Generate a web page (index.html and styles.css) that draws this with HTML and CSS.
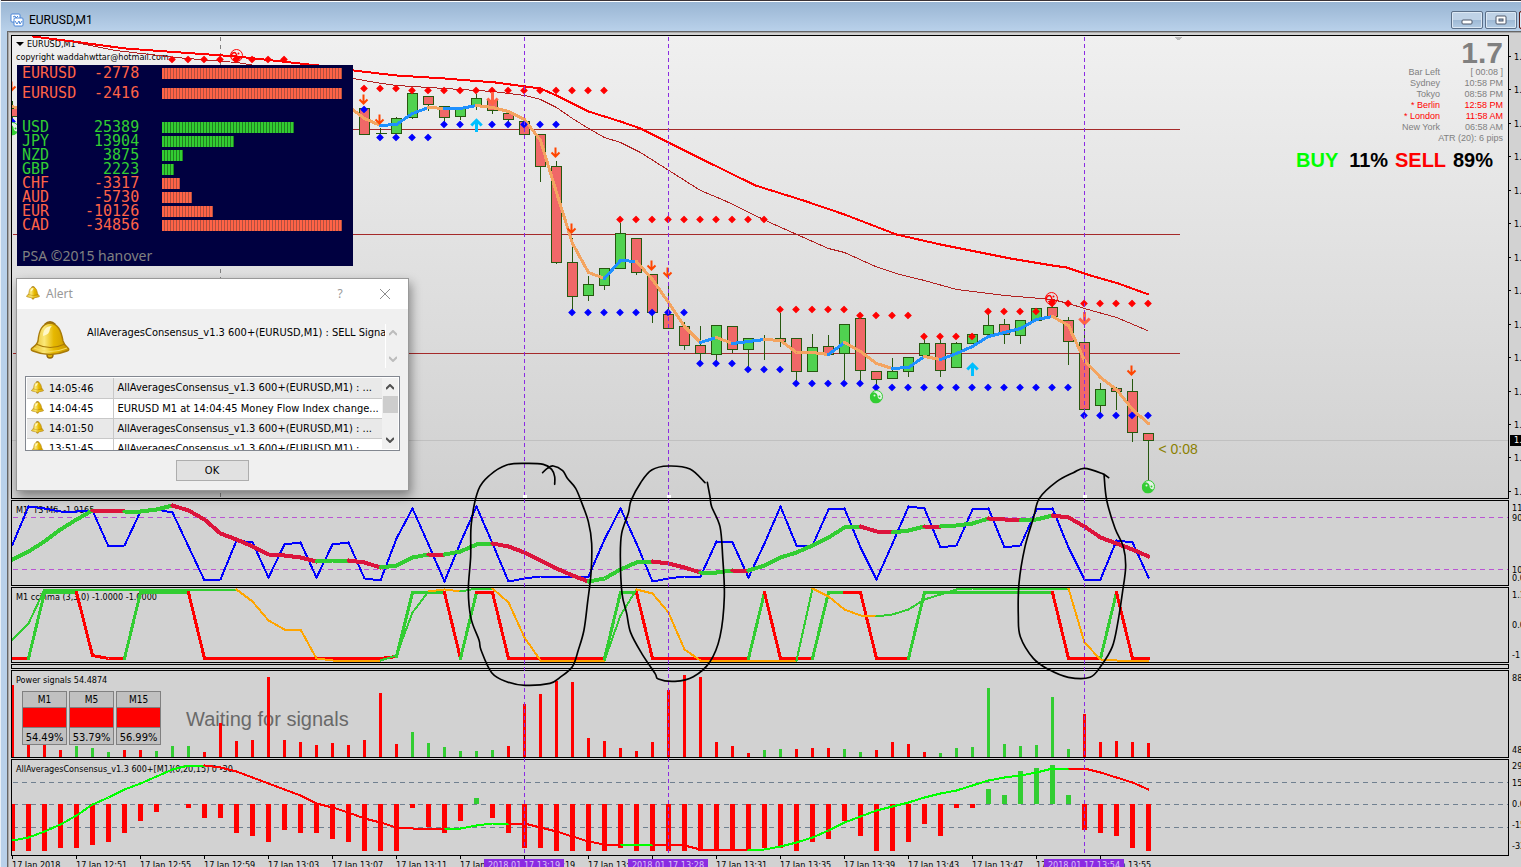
FILE: index.html
```html
<!DOCTYPE html>
<html lang="en">
<head>
<meta charset="utf-8">
<title>EURUSD,M1</title>
<link rel="stylesheet" href="styles.css">
</head>
<body>
<svg class="defs" aria-hidden="true">
  <defs>
    <linearGradient id="gold" x1="0" x2="1" y1="0" y2="0">
      <stop offset="0" stop-color="#e0b418"/><stop offset=".35" stop-color="#fbe878"/><stop offset=".6" stop-color="#e6b800"/><stop offset="1" stop-color="#c89600"/>
    </linearGradient>
    <symbol id="bell" viewBox="0 0 40 40">
      <circle cx="20" cy="35" r="3" fill="#e6b800" stroke="#94690a" stroke-width="1.4"/>
      <path d="M14 4Q20 -2 26 4L24 5H16Z" fill="#94690a"/>
      <path d="M8 21C9 10 12 4 20 3C28 4 31 10 33 21Q34 25 38 28Q40 30 37 31Q20 38 3 31Q0 30 2 28Q7 25 8 21Z" fill="url(#gold)" stroke="#a87a08" stroke-width="1.4"/>
      <path d="M13 16C13 10 16 6 22 6C18 9 22 14 13 16Z" fill="#fff8c8"/>
      <path d="M6 24Q20 31 35 24" fill="none" stroke="#a87a08" stroke-width="1.2"/>
      <path d="M4 28Q20 35 37 28" fill="none" stroke="#f4dc60" stroke-width="1.2"/>
    </symbol>
    <symbol id="yin-full" viewBox="0 0 14 14">
      <circle cx="7" cy="7" r="6" fill="#e6f2e6" stroke="currentColor" stroke-width="1"/>
      <path d="M3 3A4 4 0 0 1 8 6Q8 10 12 10A6 6 0 1 1 3 3Z" fill="currentColor"/>
      <circle cx="5" cy="6" r="1" fill="#e6f2e6"/><circle cx="10" cy="7" r="1" fill="currentColor"/>
    </symbol>
    <symbol id="yin-open" viewBox="0 0 14 14">
      <circle cx="7" cy="7" r="6" fill="none" stroke="currentColor" stroke-width="1"/>
      <path d="M2 9V6Q5 2 7 6Q7 10 12 9" fill="none" stroke="currentColor" stroke-width="1.4"/>
      <path d="M3 10L7 8L11 10Q7 14 3 10Z" fill="currentColor"/><circle cx="9" cy="5" r="1" fill="currentColor"/>
    </symbol>
  </defs>
</svg>
<div class="window">
  <header class="titlebar">
    <svg class="app-icon" viewBox="0 0 14 14"><rect x="1" y="1" width="9" height="8" rx="1" fill="#fff" stroke="#4a86d8"/><path d="M3 4L5 3L6 5L8 3" fill="none" stroke="#4a86d8"/><rect x="4" y="5" width="9" height="8" rx="1" fill="#fff" stroke="#4a86d8"/><path d="M5 8L7 11L9 8L10 11L12 8" fill="none" stroke="#4a86d8"/></svg>
    <h1>EURUSD,M1</h1>
    <div class="win-buttons">
      <button aria-label="Minimize"><svg viewBox="0 0 12 10"><rect x="1" y="5" width="10" height="4" rx="1" fill="#fff" stroke="#4c5668"/></svg></button>
      <button aria-label="Maximize"><svg viewBox="0 0 12 10"><rect x="1" y="1" width="10" height="8" rx="1" fill="#fff" stroke="#4c5668"/><rect x="4" y="4" width="4" height="2" fill="#9db8d6" stroke="#4c5668"/></svg></button>
      <button class="close" aria-label="Close"></button>
    </div>
  </header>
  <main class="client">
    <div class="charts">
      <section class="row">
        <div class="pane price">
          <div class="labels"><p class="symbol"><span class="caret"></span>EURUSD,M1</p><p>copyright waddahwttar@hotmail.com</p></div>
          <svg class="plot" id="price" height="462"></svg>
          <div class="info">
            <strong class="spread">1.7</strong>
            <dl>
              <dt>Bar Left</dt><dd>[ 00:08 ]</dd>
              <dt>Sydney</dt><dd>10:58 PM</dd>
              <dt>Tokyo</dt><dd>08:58 PM</dd>
              <dt class="open">* Berlin</dt><dd class="open">12:58 PM</dd>
              <dt class="open">* London</dt><dd class="open">11:58 AM</dd>
              <dt>New York</dt><dd>06:58 AM</dd>
            </dl>
            <p class="atr">ATR (20): 6 pips</p>
            <p class="votes"><span class="buy">BUY</span><span>11%</span><span class="sell">SELL</span><span>89%</span></p>
          </div>
        </div>
        <div class="axis price-axis"><span>1.</span><span>1.</span><span>1.</span><span>1.</span><span>1.</span><span>1.</span><span>1.</span><span>1.</span><span>1.</span><span>1.</span><span>1.</span><span>1.</span><span>1.</span><span>1.</span><b class="bid">1.</b></div>
      </section>
      <section class="row">
        <div class="pane"><div class="labels"><p>M1&nbsp; T3 Mfi&nbsp; -1.9165</p></div><svg class="plot" id="mfi" height="84"></svg></div>
        <div class="axis mfi-axis"><span>11</span><span>90</span><i></i><span>10</span><span>0.0</span></div>
      </section>
      <section class="row">
        <div class="pane"><div class="labels"><p>M1 ccinma (3,3,0) -1.0000 -1.0000</p></div><svg class="plot" id="cci" height="74"></svg></div>
        <div class="axis"><span>1.1</span><span>0.0</span><span>-1</span></div>
      </section>
      <section class="row"><div class="pane empty"></div><div class="axis"></div></section>
      <section class="row">
        <div class="pane">
          <div class="labels"><p>Power signals 54.4874</p><p class="waiting">Waiting for signals</p></div>
          <svg class="plot" id="power" height="86"></svg>
          <div class="tiles">
            <div class="tile"><b>M1</b><i></i><span>54.49%</span></div>
            <div class="tile"><b>M5</b><i></i><span>53.79%</span></div>
            <div class="tile"><b>M15</b><i></i><span>56.99%</span></div>
          </div>
        </div>
        <div class="axis"><span>88</span><span>48</span></div>
      </section>
      <section class="row">
        <div class="pane"><div class="labels"><p>AllAveragesConsensus_v1.3 600+[M1](0,20,15) 0 -30</p></div><svg class="plot" id="consensus" height="95"></svg></div>
        <div class="axis aac-axis"><span>29</span><span>15</span><span>0.0</span><span>-15</span><span>-33</span></div>
      </section>
      <svg class="overlay" id="overlay"></svg>
      <footer class="times">
        <span>17 Jan 2018</span><span>17 Jan 12:51</span><span>17 Jan 12:55</span><span>17 Jan 12:59</span><span>17 Jan 13:03</span><span>17 Jan 13:07</span><span>17 Jan 13:11</span><span>17 Jan 13:15</span><span>17 Jan 13:19</span><span>17 Jan 13:23</span><span>17 Jan 13:27</span><span>17 Jan 13:31</span><span>17 Jan 13:35</span><span>17 Jan 13:39</span><span>17 Jan 13:43</span><span>17 Jan 13:47</span><span>17 Jan 13:51</span><span>17 Jan 13:55</span>
        <mark class="m1">2018.01.17 13:19</mark><mark class="m2">2018.01.17 13:28</mark><mark class="m3">2018.01.17 13:54</mark>
      </footer>

      <aside class="psa">
        <table>
          <tr class="neg pair"><th>EURUSD</th><td>-2778</td><td><i style="width:180px"></i></td></tr>
          <tr class="neg pair"><th>EURUSD</th><td>-2416</td><td><i style="width:180px"></i></td></tr>
          <tr class="gap"><td colspan="3"></td></tr>
          <tr><th>USD</th><td>25389</td><td><i style="width:132px"></i></td></tr>
          <tr><th>JPY</th><td>13904</td><td><i style="width:72px"></i></td></tr>
          <tr><th>NZD</th><td>3875</td><td><i style="width:21px"></i></td></tr>
          <tr><th>GBP</th><td>2223</td><td><i style="width:12px"></i></td></tr>
          <tr class="neg"><th>CHF</th><td>-3317</td><td><i style="width:18px"></i></td></tr>
          <tr class="neg"><th>AUD</th><td>-5730</td><td><i style="width:30px"></i></td></tr>
          <tr class="neg"><th>EUR</th><td>-10126</td><td><i style="width:51px"></i></td></tr>
          <tr class="neg"><th>CAD</th><td>-34856</td><td><i style="width:180px"></i></td></tr>
        </table>
        <p>PSA ©2015 hanover</p>
      </aside>

      <div class="dialog" role="dialog" aria-labelledby="alert-title">
        <div class="dialog-title">
          <svg class="bell-sm"><use href="#bell"/></svg><h2 id="alert-title">Alert</h2>
          <button aria-label="Help">?</button>
          <button aria-label="Close"><svg width="12" height="12" viewBox="0 0 12 12"><path d="M1 1L11 11M11 1L1 11" stroke="#8c8c8c"/></svg></button>
        </div>
        <div class="message">
          <svg class="bell-lg"><use href="#bell"/></svg>
          <p>AllAveragesConsensus_v1.3 600+(EURUSD,M1) : SELL Signa</p>
          <div class="scroll faint"><svg viewBox="0 0 8 6"><path d="M0 5L4 1L8 5"/></svg><svg viewBox="0 0 8 6"><path d="M0 1L4 5L8 1"/></svg></div>
        </div>
        <div class="list">
          <table>
            <tr><td><svg><use href="#bell"/></svg>14:05:46</td><td>AllAveragesConsensus_v1.3 600+(EURUSD,M1) : ...</td></tr>
            <tr><td><svg><use href="#bell"/></svg>14:04:45</td><td>EURUSD M1 at 14:04:45 Money Flow Index change...</td></tr>
            <tr><td><svg><use href="#bell"/></svg>14:01:50</td><td>AllAveragesConsensus_v1.3 600+(EURUSD,M1) : ...</td></tr>
            <tr><td><svg><use href="#bell"/></svg>13:51:45</td><td>AllAveragesConsensus_v1.3 600+(EURUSD,M1) : ...</td></tr>
          </table>
          <div class="scroll"><svg viewBox="0 0 8 6"><path d="M0 5L4 1L8 5"/></svg><i></i><svg viewBox="0 0 8 6"><path d="M0 1L4 5L8 1"/></svg></div>
        </div>
        <button class="ok">OK</button>
      </div>
    </div>
  </main>
</div>
<script src="chart.js"></script>
</body>
</html>
```
FILE: styles.css
```css
* { box-sizing: border-box; margin: 0; padding: 0; }
body { font: 9px/12px "DejaVu Sans Condensed", "DejaVu Sans", sans-serif; color: #000; background: #b9d1ea; }
.defs { position: absolute; width: 0; height: 0; }
button { font: inherit; color: inherit; background: none; border: 0; }
table { border-collapse: collapse; }
i { font-style: normal; }

.window { height: 100vh; display: flex; flex-direction: column; overflow: hidden; border-left: 1px solid #e8f0f8; }
.titlebar { flex: none; height: 31px; display: flex; align-items: center; padding: 7px 0 0 9px; gap: 5px; border-top: 1px solid #3a3236; box-shadow: inset 0 1px #fff; background: linear-gradient(#98b4d2, #b9d1ea); overflow: hidden; }
.app-icon { width: 14px; height: 14px; }
.titlebar h1 { flex: 1; font: 12px/16px Roboto, sans-serif; }
.win-buttons { display: flex; gap: 2px; margin-right: -30px; }
.win-buttons button { width: 32px; height: 18px; display: grid; place-items: center; border: 1px solid #5b6f88; border-radius: 2px; box-shadow: inset 0 0 0 1px #dce8f4; background: linear-gradient(#bfd2e6 50%, #9db8d4 50%, #b4cce4); }
.win-buttons svg { width: 12px; height: 10px; }
.win-buttons .close { background: #c0402c; border-color: #5a1a14; }

.client { flex: 1; min-height: 0; margin-left: 6px; padding: 3px 0 0 3px; border: solid #666; border-width: 1px 0 0 1px; background: #d2d2d2; box-shadow: inset 1px 1px #a8a8a8; }
.charts { position: relative; display: flex; flex-direction: column; gap: 1px; }
.row { display: flex; }
.pane { position: relative; flex: 1; min-width: 0; border: 1px solid #000; background: #d2d2d2; overflow: hidden; display: grid; }
.price { background: linear-gradient(#f0f0f0, #d0d0d0); }
.pane > .labels, .pane > .plot { grid-area: 1 / 1; }
.labels { padding: 3px 4px; white-space: nowrap; }
.price .labels { padding-top: 1px; }
.price .labels p { height: 13px; line-height: 14px; }
.symbol { display: flex; align-items: center; gap: 3px; }
.caret { border: solid transparent; border-width: 4px 4px 0; border-top-color: #000; }
.plot { width: 100%; display: block; shape-rendering: crispEdges; }
.empty { height: 5px; }
.overlay { position: absolute; left: 0; top: 0; width: 100%; height: 820px; pointer-events: none; }

.axis { flex: none; width: 12px; padding: 2px 0 2px 3px; display: flex; flex-direction: column; justify-content: space-between; overflow: hidden; white-space: nowrap; position: relative; }
.price-axis { padding: 16px 0 1px 0; }
.price-axis span::before { content: ""; display: inline-block; width: 2px; height: 1px; margin-right: 3px; vertical-align: 3px; background: #000; }
.bid { position: absolute; left: 1px; top: 400px; width: 11px; height: 11px; line-height: 11px; padding-left: 4px; font-weight: normal; background: #000; color: #fff; }
.mfi-axis { justify-content: start; }
.mfi-axis span { height: 10px; }
.mfi-axis i { flex: 0 0 42px; }
.mfi-axis span:last-child { line-height: 8px; }
.aac-axis { padding: 1px 0 0 3px; justify-content: start; }
.aac-axis span { flex: none; height: 21px; }
.aac-axis span:first-child { height: 17px; }
.aac-axis span:last-child { height: 12px; }

.times { display: flex; position: relative; height: 14px; padding: 2px 0 0 1px; }
.times span { flex: none; width: 64px; white-space: nowrap; }
.times span::before { content: ""; position: absolute; top: -1px; width: 1px; height: 3px; background: #000; }
.times mark { position: absolute; top: 2px; width: 80px; text-align: center; color: #d8c8f4; background: #8a2be2; white-space: nowrap; }
.m1 { left: 473px; } .m2 { left: 617px; } .m3 { left: 1033px; }

.info { position: absolute; top: 2px; right: 5px; width: 212px; font: 9px/11px "Liberation Sans", Arial, sans-serif; color: #808080; text-align: right; }
.spread { display: block; font-size: 30px; line-height: 29px; }
.info dl { display: grid; grid-template-columns: 1fr 63px; }
.info .open { color: #f00; }
.votes { display: flex; justify-content: space-between; padding: 6px 10px 0 5px; font-size: 20px; line-height: 20px; font-weight: bold; color: #000; }
.votes .buy { color: #0f0; margin-right: 4px; } .votes .sell { color: #f00; }

.waiting { padding: 21px 0 0 170px; font: 20px/24px "Liberation Sans", Arial, sans-serif; color: #696969; }
.tiles { position: absolute; left: 10px; top: 20px; display: flex; gap: 2px; font-size: 11px; text-align: center; }
.tile { width: 45px; height: 54px; display: flex; flex-direction: column; border: 1px solid #808080; background: #c0c0c0; }
.tile b { height: 15px; line-height: 16px; font-weight: normal; font-size: 10px; }
.tile i { flex: none; height: 21px; background: #f00; border: solid #808080; border-width: 1px 0; }
.tile span { height: 16px; line-height: 19px; }

.psa { position: absolute; left: 6px; top: 30px; width: 336px; height: 201px; background: #000040; font: 15px/14px "DejaVu Sans Mono", monospace; color: #32cd32; }
.psa table { position: relative; margin-left: 5px; }
.psa tr { height: 14px; }
.psa .pair { height: 20px; vertical-align: top; }
.psa .gap { height: 14px; }
.psa th { width: 54px; padding-top: 2px; line-height: 12px; font-weight: normal; text-align: left; }
.psa td:nth-child(2) { width: 63px; padding-top: 2px; line-height: 12px; text-align: right; }
.psa .pair th, .psa .pair td:nth-child(2) { line-height: 13px; }
.psa td:nth-child(3) { padding-left: 23px; }
.psa tr i { display: block; height: 11px; margin-top: 3px; background: repeating-linear-gradient(90deg, #32cd32 0 2px, #208020 2px 3px); }
.psa .neg { color: #ff6347; }
.psa .neg i { background: repeating-linear-gradient(90deg, #ff6347 0 2px, #b0503f 2px 3px); }
.psa p { padding: 16px 0 0 5px; font: 14px/18px "Noto Sans", sans-serif; color: #808080; }

.dialog { position: absolute; left: 5px; top: 243px; width: 393px; display: flex; flex-direction: column; padding-bottom: 9px; background: #f0f0f0; border: 1px solid #999; box-shadow: 2px 5px 10px rgba(0, 0, 0, .4); font-size: 11px; line-height: 14px; }
.dialog-title { height: 30px; display: flex; align-items: center; padding: 0 7px 0 9px; background: #fff; color: #999; font: 12px/16px "Noto Sans", sans-serif; }
.dialog-title h2 { flex: 1; font: inherit; margin-left: 6px; }
.dialog-title button { width: 32px; height: 30px; margin-left: 13px; display: grid; place-items: center; }
.bell-sm { width: 14px; height: 14px; margin-bottom: 2px; }
.message { display: flex; padding: 11px 9px 0 13px; height: 67px; }
.bell-lg { width: 40px; height: 40px; flex: none; }
.message p { flex: 1; margin-left: 17px; padding-top: 6px; white-space: nowrap; overflow: hidden; }
.scroll { flex: none; width: 16px; display: flex; flex-direction: column; align-items: center; justify-content: space-between; background: #f0f0f0; }
.scroll svg { width: 8px; height: 6px; fill: none; stroke: #505050; stroke-width: 2; margin: 6px 0; }
.scroll.faint { width: 14px; height: 44px; margin-top: 4px; border-left: 1px solid #fff; }
.scroll.faint svg { stroke: #bcbcbc; }
.scroll i { width: 15px; height: 17px; background: #cdcdcd; margin-bottom: auto; }
.list { display: flex; height: 75px; margin: 0 8px; padding: 1px; border: 1px solid #828790; background: #fff; overflow: hidden; }
.list table { flex: 1; height: 80px; table-layout: fixed; }
.list td { height: 20px; padding: 1px 0 0 4px; border: 1px solid #c8c8c8; border-width: 0 0 1px; white-space: nowrap; overflow: hidden; }
.list td:first-child { width: 86px; border-right-width: 1px; }
.list tr:nth-child(odd) { background: #e9e9e9; }
.list td svg { width: 13px; height: 13px; margin-right: 5px; vertical-align: -2px; }
.ok { width: 73px; height: 21px; margin: 9px auto 0 159px; padding-right: 1px; border: 1px solid #adadad; background: #e1e1e1; }
```
FILE: chart.js
```javascript
const NS = 'http://www.w3.org/2000/svg';
const X = i => 12 + 16 * i;
const RED = '#f00', LIME = '#32cd32', CRIMSON = '#dc143c';

function el(parent, name, attrs, text) {
  const e = document.createElementNS(NS, name);
  for (const k in attrs) e.setAttribute(k, attrs[k]);
  if (text) e.textContent = text;
  parent.appendChild(e);
  return e;
}
// Group whose coordinates share one origin across every pane.
const layer = (id, x, y) => el(document.getElementById(id), 'g', { transform: `translate(${0.5 - x} ${0.5 - y})` });
const line = (g, x1, y1, x2, y2, stroke, w = 1, extra = {}) => el(g, 'line', { x1, y1, x2, y2, stroke, 'stroke-width': w, ...extra });
const poly = (g, pts, stroke, w) => el(g, 'polyline', { points: pts.map(p => p.join()).join(' '), fill: 'none', stroke, 'stroke-width': w, 'stroke-linejoin': 'round', 'stroke-linecap': 'round' });

// ys: one value per bar; runs: [last index, colour] pairs.
function series(g, ys, runs, w, start = 0) {
  let from = start;
  for (const [to, color] of runs) {
    const pts = [];
    for (let i = from; i <= to; i++) pts.push([X(i), ys[i - start]]);
    poly(g, pts, color, w);
    from = to;
  }
}

/* price pane */
const price = layer('price', 12, 36);
line(price, 220, 36, 220, 498, '#808080', 1, { 'stroke-dasharray': '4 4' });
line(price, 0, 440, 4000, 440, '#c0c0c0');
for (const y of [129, 234, 353]) line(price, 12, y, 1179, y, '#a52a2a');
el(price, 'path', { d: 'M1173 36H1182L1178 40Z', fill: '#b8b8b8' });

const candles = [[0,100,108,116,122,0],[22,108,108,134,134,0],[23,127,133,133,133,1],[24,116,118,133,133,1],[25,93,93,117,118,1],[26,96,96,104,110,0],[27,106,106,117,121,0],[28,107,107,116,119,1],[29,93,98,105,109,1],[30,100,100,110,113,0],[31,113,113,119,122,0],[32,121,121,134,138,0],[33,134,134,166,181,0],[34,160,166,262,263,0],[35,237,262,296,310,0],[36,275,284,295,300,1],[37,268,268,285,289,1],[38,222,233,268,268,1],[39,238,238,272,274,0],[40,274,274,312,322,0],[41,281,314,328,328,0],[42,321,326,345,349,0],[43,325,345,353,362,0],[44,325,325,354,362,1],[45,326,326,349,352,0],[46,337,338,349,368,1],[47,334,339,339,359,1],[48,312,338,341,346,0],[49,338,338,371,382,0],[50,333,347,371,371,1],[51,334,346,354,354,0],[52,324,324,353,379,1],[53,318,318,370,382,0],[54,371,371,379,386,0],[55,357,371,378,378,1],[56,357,357,371,376,1],[57,338,343,355,355,1],[58,338,343,370,376,0],[59,341,343,367,367,1],[60,334,334,343,343,1],[61,313,325,334,334,1],[62,318,324,334,343,0],[63,320,320,335,343,1],[64,308,308,320,320,1],[65,304,307,316,316,0],[66,316,320,341,364,0],[67,328,342,409,413,0],[68,382,389,405,413,1],[69,386,388,391,409,0],[70,378,391,432,441,0],[71,433,433,440,483,0]];
for (const [i, hi, top, bot, lo, up] of candles) {
  const x = X(i);
  line(price, x, hi, x, lo, '#26580f');
  if (top === bot) line(price, x - 5, top, x + 6, top, '#26580f');
  else el(price, 'rect', { x: x - 5, y: top, width: 10, height: bot - top, fill: up ? '#50d250' : '#f06868', stroke: '#26580f' });
}

poly(price, [[33,36],[80,42],[125,48],[236,56],[318,65],[353,70],[396,75],[444,78],[495,82],[525,86],[540,88],[556,95],[572,103],[588,111],[604,116],[620,121],[640,128],[700,158],[755,185],[803,200],[844,214],[896,234],[940,244],[1010,258],[1052,265],[1066,267],[1090,275],[1118,283],[1148,294]], RED, 2);
poly(price, [[75,42],[115,50],[150,54],[175,57],[236,62],[248,64],[353,78],[375,82],[396,85],[428,87],[460,89],[492,91],[525,95],[540,99],[556,107],[572,118],[588,128],[604,137],[620,142],[640,152],[700,190],[724,200],[765,220],[803,237],[828,248],[844,252],[875,266],[899,274],[924,280],[956,289],[1004,295],[1052,299],[1068,303],[1084,308],[1116,317],[1147,330]], '#b22222', 1);

const OR = '#f4a460', BL = '#1e90ff';
poly(price, [[12,106],[18,108]], OR, 3);
series(price, [106,118,125,124,113,107,108,108,105,107,111,119,140,192,243,272,278,260,261,279,302,326,342,337,343,341,339,340,352,352,354,342,351,363,368,367,356,359,353,346,336,332,328,319,316,325,360,377,389,409,423],
  [[23,OR],[26,BL],[27,OR],[29,BL],[37,OR],[39,BL],[43,OR],[44,BL],[45,OR],[47,BL],[51,OR],[52,BL],[55,OR],[57,BL],[58,OR],[65,BL],[71,OR]], 3, 21);

function dots(color, groups) {
  for (const [a, b, y] of groups)
    for (let i = a; i <= b; i++) el(price, 'path', { d: `M${X(i) - 0.5} ${y - 3}l3 3l-3 3l-3 -3Z`, fill: color, stroke: color, 'stroke-width': 1.2, 'shape-rendering': 'auto' });
}
dots('#f00', [[10,17,59],[22,24,88],[25,37,90],[38,47,219],[48,52,309],[53,56,315],[57,60,336],[61,64,311],[65,71,303]]);
dots('#00f', [[0,0,121],[22,22,109],[23,26,137],[27,28,124],[30,34,124],[35,42,312],[43,45,363],[46,48,369],[49,53,383],[54,66,387],[67,71,415]]);

const arrow = (x, y, s, color, dir = 1) => el(price, 'path', {
  d: `M${x} ${y - 5 * s * dir}V${y + 4 * s * dir}M${x - 4 * s} ${y}L${x} ${y + 4 * s * dir}L${x + 4 * s} ${y}`,
  fill: 'none', stroke: color, 'stroke-width': s > 1 ? 3 : 2, 'shape-rendering': 'auto' });
for (const [x, y] of [[11,86],[363,99],[379,119],[555,152],[571,228],[651,265],[667,272],[1131,370]]) arrow(x, y, 1, '#ff4500');
for (const [x, y] of [[492,98],[1084,318]]) arrow(x, y, 1.3, '#ff6347');
for (const [x, y] of [[476,125],[972,369]]) arrow(x, y, 1.3, '#00bfff', -1);
for (const [x, y, c, id] of [[236,55,'#f00','open'],[1051,298,'#f00','open'],[876,396,'#32cd32','full'],[1148,486,'#32cd32','full'],[12,128,'#32cd32','full']])
  el(price, 'use', { href: '#yin-' + id, x: x - 7, y: y - 7, width: 14, height: 14, color: c, 'shape-rendering': 'auto' });
el(price, 'text', { x: 1158, y: 453, fill: '#8b8000', 'font-size': 14, 'font-family': 'Liberation Sans, Arial, sans-serif' }, '< 0:08');

/* money flow index */
const mfi = layer('mfi', 12, 501);
for (const y of [517, 569]) line(mfi, 12, y, 4000, y, '#ba55d3', 1, { 'stroke-dasharray': '5 4' });
series(mfi, [544,506,508,511,511,510,546,545,511,509,512,546,580,579,540,542,577,544,542,577,544,542,578,580,538,508,544,581,542,506,543,581,578,576,576,576,576,539,508,543,581,578,576,576,541,542,577,543,506,545,545,509,508,547,579,543,506,508,547,545,509,508,547,545,509,508,547,579,579,540,542,577], [[71,'#00f']], 2);
series(mfi, [559,551,541,529,519,510,510,511,511,509,505,510,519,533,539,546,554,555,557,561,560,560,562,567,565,557,554,554,551,544,543,546,552,560,568,575,581,578,569,562,561,563,567,572,572,570,570,565,557,552,545,537,527,526,531,532,530,526,526,525,523,518,519,520,519,515,517,526,537,543,549,556],
  [[5,LIME],[7,CRIMSON],[10,LIME],[19,CRIMSON],[21,LIME],[23,CRIMSON],[26,LIME],[27,CRIMSON],[30,LIME],[36,CRIMSON],[40,LIME],[43,CRIMSON],[45,LIME],[46,CRIMSON],[53,LIME],[55,CRIMSON],[57,LIME],[58,CRIMSON],[61,LIME],[63,CRIMSON],[65,LIME],[71,CRIMSON]], 4);

/* cci / moving average */
const cci = layer('cci', 12, 588);
const H = 592, L = 658;
series(cci, [L,L,H,H,H,655,L,L,H,H,H,H,L,L,L,L,L,L,L,L,L,L,L,L,656,H,H,H,L,H,H,L,L,L,L,L,L,L,H,H,L,L,L,L,L,L,L,H,L,L,L,H,H,H,L,L,L,H,H,H,H,H,H,H,H,H,L,L,L,H,L,L],
  [[1,RED],[4,LIME],[7,RED],[8,LIME],[11,LIME],[24,RED],[27,LIME],[28,RED],[29,LIME],[37,RED],[39,LIME],[46,RED],[47,LIME],[50,RED],[52,LIME],[56,RED],[65,LIME],[68,RED],[69,LIME],[71,RED]], 3);
series(cci, [639,623,589,589,589,589,589,589,589,589,589,589,589,589,589,601,620,629,629,658,660,660,660,660,655,612,591,589,591,588,588,602,637,660,660,660,660,660,615,589,593,612,649,660,660,660,660,660,660,660,588,596,609,615,616,614,609,599,594,589,588,588,588,588,588,588,588,642,659,660,660,660],
  [[14,LIME],[23,'#ffa500'],[26,LIME],[28,'#ffa500'],[30,LIME],[37,'#ffa500'],[39,LIME],[49,'#ffa500'],[50,LIME],[54,'#ffa500'],[66,LIME],[71,'#ffa500']], 2);

/* power signals */
const power = layer('power', 12, 671);
const greens = new Set([4,5,6,9,10,11,25,26,27,28,29,30,47,48,52,53,58,59,60,61,62,63,64,65,66]);
[685,745,745,750,746,748,752,750,750,751,746,746,752,723,741,740,677,740,742,745,743,745,740,693,744,732,743,747,751,751,750,746,704,694,681,682,738,741,748,751,742,690,675,677,742,746,753,750,749,749,748,748,749,752,750,742,744,752,753,748,747,688,744,746,745,697,749,714,742,741,742,743]
  .forEach((y, i) => line(power, X(i), y - 0.5, X(i), 758, greens.has(i) ? LIME : RED, 3));

/* averages consensus */
const cons = layer('consensus', 12, 760);
for (const y of [782, 804, 827]) line(cons, 12, y, 4000, y, '#708090', 1, { 'stroke-dasharray': '5 4' });
[851,851,851,848,848,845,842,833,821,812,804,808,818,818,833,836,842,830,833,833,839,842,851,851,851,808,827,833,821,798,818,833,848,848,851,851,851,851,848,851,851,851,851,851,851,851,848,848,851,842,839,821,836,851,851,842,824,836,808,808,789,795,771,768,765,795,830,833,836,848,851]
  .forEach((y, i, all) => {
    if (i === 39) all.repeat = true;
    const draw = k => y !== 804 && line(cons, X(k), 803.5, X(k), y - 0.5, y < 804 ? LIME : RED, 5);
    draw(all.repeat ? i + 1 : i);
    if (i === 39) draw(39);
  });
series(cons, [840,837,831,824,815,804,797,789,783,776,769,765,765,767,771,777,783,789,795,803,807,812,818,822,827,828,828,828,828,825,823,823,823,827,831,836,841,844,844,844,844,844,845,849,849,849,850,849,846,842,837,830,822,816,810,806,802,797,793,790,785,780,777,775,772,768,768,768,772,777,782,789],
  [[12,'#0f0'],[27,RED],[31,'#0f0'],[38,RED],[40,'#0f0'],[46,RED],[66,'#0f0'],[71,RED]], 2);

/* vertical markers and pen marks, over every pane */
const over = layer('overlay', 11, 35);
for (const x of [524, 668, 1084]) {
  line(over, x, 36, x, 854, '#8a2be2', 1, { 'stroke-dasharray': '4 3', 'shape-rendering': 'crispEdges' });
  el(over, 'rect', { x: x - 1.5, y: 494.5, width: 4, height: 3, fill: '#fff' });
}
function pen(x0, y0, pts) {
  let d = `M${pts[0]}`;
  for (let i = 0; i < pts.length - 1; i++) {
    const p0 = pts[i - 1] || pts[i], p1 = pts[i], p2 = pts[i + 1], p3 = pts[i + 2] || p2;
    d += `C${p1[0] + (p2[0] - p0[0]) / 6} ${p1[1] + (p2[1] - p0[1]) / 6} ${p2[0] - (p3[0] - p1[0]) / 6} ${p2[1] - (p3[1] - p1[1]) / 6} ${p2}`;
  }
  el(over, 'path', { d, transform: `translate(${x0 - 0.5} ${y0 - 0.5}) scale(${1 / 3})`, fill: 'none', stroke: '#000', 'stroke-width': 5, 'stroke-linecap': 'round' });
}
pen(410, 450, [[398,68],[412,55],[430,48],[458,62],[472,85],[497,115],[515,158],[535,215],[545,280],[543,370],[533,455],[522,540],[505,600],[487,650],[450,682],[420,700],[345,706],[290,695],[245,668],[213,600],[207,570],[183,505],[175,420],[182,320],[184,220],[205,120],[240,75],[290,45],[345,40],[400,43],[425,58],[434,80],[434,103]]);
pen(410, 450, [[885,98],[840,57],[775,48],[725,60],[692,98],[663,152],[655,190],[635,250],[631,320],[636,430],[650,490],[662,548],[695,610],[735,670],[745,687],[795,694],[850,680],[900,635],[930,560],[943,440],[938,320],[930,230],[905,170],[900,140],[892,97]]);
pen(800, 450, [[926,83],[905,70],[853,55],[820,68],[770,95],[718,145],[700,205],[675,290],[657,400],[655,500],[661,560],[700,625],[745,658],[805,682],[870,682],[905,645],[937,590],[953,520],[967,430],[977,350],[970,290],[945,235],[920,150],[912,72]]);
```
